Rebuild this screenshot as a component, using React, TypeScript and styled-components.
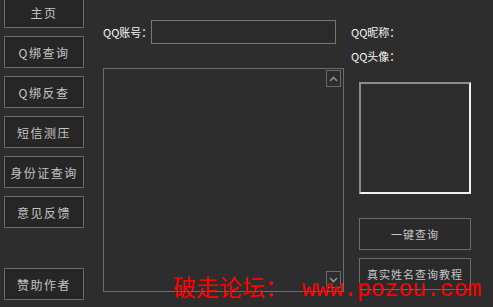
import React from 'react';
import styled, { createGlobalStyle } from 'styled-components';

const GlobalStyle = createGlobalStyle`
  html, body {
    margin: 0;
    padding: 0;
    background: #2d2d2d;
  }
  #root {
    height: 307px;
    overflow: hidden;
  }
`;

const Window = styled.div`
  position: relative;
  display: flex;
  height: 307px;
  padding-left: 4px;
  box-sizing: border-box;
  background: #2d2d2d;
  font-family: 'Noto Sans CJK SC', 'DejaVu Sans', sans-serif;
  overflow: hidden;
`;

const SideNav = styled.nav`
  display: flex;
  flex-direction: column;
  gap: 8px;
  width: 80px;
  margin-top: -4px;
  padding-bottom: 7px;
`;

const NavButton = styled.button<{ $bottom?: boolean }>`
  height: 32px;
  width: 80px;
  margin-top: ${(p) => (p.$bottom ? 'auto' : '0')};
  background: #262626;
  border: 1px solid #6b6b6b;
  color: #c4c4c4;
  font-family: inherit;
  font-size: 12px;
  letter-spacing: 1.5px;
  padding: 0;
  cursor: pointer;
`;

const Center = styled.section`
  display: flex;
  flex-direction: column;
  width: 241px;
  margin-left: 19px;
  padding-top: 20px;
`;

const FieldRow = styled.div`
  display: flex;
  align-items: center;
  height: 24px;
`;

const Label = styled.span`
  color: #f4f4f4;
  font-size: 11px;
  white-space: nowrap;
  width: 48px;
`;

const TextInput = styled.input`
  width: 185px;
  height: 24px;
  box-sizing: border-box;
  background: #2b2b2b;
  border: 1px solid #777777;
  outline: none;
  color: #eeeeee;
`;

const LogBox = styled.div`
  display: flex;
  justify-content: flex-end;
  margin-top: 24px;
  height: 224px;
  box-sizing: border-box;
  border: 1px solid #6b6b6b;
  padding: 1px 2px;
`;

const ScrollTrack = styled.div`
  display: flex;
  flex-direction: column;
  justify-content: space-between;
  width: 15px;
  padding-bottom: 2px;
`;

const ScrollButton = styled.div`
  display: flex;
  align-items: center;
  justify-content: center;
  width: 15px;
  height: 17px;
  box-sizing: border-box;
  border: 1px solid #6b6b6b;
`;

const Right = styled.section`
  display: flex;
  flex-direction: column;
  margin-left: 7px;
  width: 120px;
  padding-top: 26px;
`;

const InfoLabel = styled.div`
  color: #f4f4f4;
  font-size: 11px;
  white-space: nowrap;
  height: 12px;
  line-height: 12px;
  margin-bottom: 12px;
`;

const Avatar = styled.div`
  margin: 8px 0 0 8px;
  width: 112px;
  height: 112px;
  box-sizing: border-box;
  border-top: 2px solid #8c8c8c;
  border-left: 2px solid #8c8c8c;
  border-right: 2px solid #f2f2f2;
  border-bottom: 2px solid #f2f2f2;
`;

const ActionButton = styled.button<{ $first?: boolean }>`
  margin: ${(p) => (p.$first ? '24px' : '8px')} 0 0 8px;
  width: 112px;
  height: 32px;
  background: #2a2a2a;
  border: 1px solid #6b6b6b;
  color: #c4c4c4;
  font-family: inherit;
  font-size: 11px;
  letter-spacing: 1px;
  padding: 0;
`;

const Watermark = styled.div`
  position: absolute;
  left: 173px;
  top: 275px;
  color: #ff0000;
  font-family: 'Liberation Mono', 'Noto Sans CJK SC', monospace;
  font-size: 23px;
  line-height: 30px;
  white-space: pre;
  pointer-events: none;
`;

const Chevron = ({ down }: { down?: boolean }) => (
  <svg width="9" height="6" viewBox="0 0 9 6">
    <path
      d={down ? 'M1 1 L4.5 4.5 L8 1' : 'M1 5 L4.5 1.5 L8 5'}
      fill="none"
      stroke="#8f8f8f"
      strokeWidth="1.6"
    />
  </svg>
);

const navItems = ['主页', 'Q绑查询', 'Q绑反查', '短信测压', '身份证查询', '意见反馈'];

export default function App() {
  return (
    <>
      <GlobalStyle />
      <Window>
        <SideNav>
          {navItems.map((t) => (
            <NavButton key={t}>{t}</NavButton>
          ))}
          <NavButton $bottom>赞助作者</NavButton>
        </SideNav>
        <Center>
          <FieldRow>
            <Label>QQ账号：</Label>
            <TextInput />
          </FieldRow>
          <LogBox>
            <ScrollTrack>
              <ScrollButton>
                <Chevron />
              </ScrollButton>
              <ScrollButton>
                <Chevron down />
              </ScrollButton>
            </ScrollTrack>
          </LogBox>
        </Center>
        <Right>
          <InfoLabel>QQ昵称：</InfoLabel>
          <InfoLabel>QQ头像：</InfoLabel>
          <Avatar />
          <ActionButton $first>一键查询</ActionButton>
          <ActionButton>真实姓名查询教程</ActionButton>
        </Right>
        <Watermark>破走论坛： www.pozou.com</Watermark>
      </Window>
    </>
  );
}
